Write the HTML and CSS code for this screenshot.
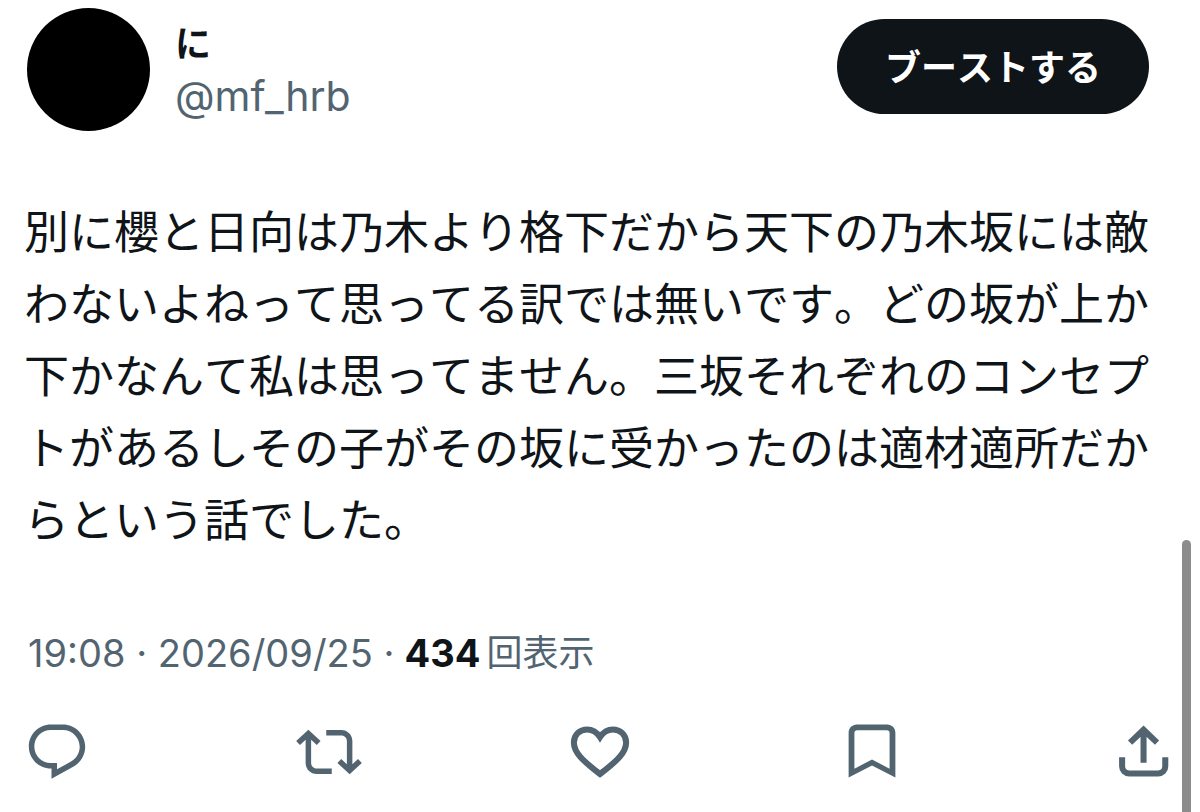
FILE: index.html
```html
<!DOCTYPE html>
<html lang="ja">
<head>
    <meta charset="UTF-8">
    <meta name="viewport" content="width=device-width, initial-scale=1.0">
    <title>に (@mf_hrb)</title>
    <link rel="stylesheet" href="styles.css">
</head>
<body>
    <article class="post">
        <header class="post-header">
            <div class="avatar"></div>
            <div class="author">
                <span class="name">に</span>
                <a class="handle" href="#">@mf_hrb</a>
            </div>
            <button class="boost" type="button">ブーストする</button>
        </header>

        <p class="post-text">別に櫻と日向は乃木より格下だから天下の乃木坂には敵<br>わないよねって思ってる訳では無いです。どの坂が上か<br>下かなんて私は思ってません。三坂それぞれのコンセプ<br>トがあるしその子がその坂に受かったのは適材適所だか<br>らという話でした。</p>

        <div class="meta">
            <span>19:08 · 2026/09/25 ·</span>
            <span class="views"><strong>434</strong><span class="views-label">回表示</span></span>
        </div>

        <div class="actions">
            <button type="button" aria-label="返信">
                <svg viewBox="0 0 24 24"><path d="M1.751 10c0-4.42 3.584-8 8.005-8h4.366c4.49 0 8.129 3.64 8.129 8.13 0 2.96-1.607 5.68-4.196 7.11l-8.054 4.46v-3.69h-.067c-4.49.1-8.183-3.51-8.183-8.01zm8.005-6c-3.317 0-6.005 2.69-6.005 6 0 3.37 2.77 6.08 6.138 6.01l.351-.01h1.761v2.3l5.087-2.81c1.951-1.08 3.163-3.13 3.163-5.36 0-3.39-2.744-6.13-6.129-6.13H9.756z"/></svg>
            </button>
            <button type="button" aria-label="リポスト">
                <svg viewBox="0 0 24 24"><path d="M4.5 3.88l4.432 4.14-1.364 1.46L5.5 7.55V16c0 1.1.896 2 2 2H13v2H7.5c-2.209 0-4-1.79-4-4V7.55L1.432 9.48.068 8.02 4.5 3.88zM16.5 6H11V4h5.5c2.209 0 4 1.79 4 4v8.45l2.068-1.93 1.364 1.46-4.432 4.14-4.432-4.14 1.364-1.46 2.068 1.93V8c0-1.1-.896-2-2-2z"/></svg>
            </button>
            <button type="button" aria-label="いいね">
                <svg viewBox="0 0 24 24"><path class="line" d="M12 6.6C10.7 4.6 9 3.8 7.3 3.8 4.6 3.8 2.5 5.8 2.5 8.5c0 3.600 3.200 6.700 9.500 11.500 6.300-4.800 9.500-7.900 9.500-11.500 0-2.700-2.100-4.700-4.800-4.700-1.700 0-3.400.8-4.700 2.800z"/></svg>
            </button>
            <button type="button" aria-label="ブックマーク">
                <svg viewBox="0 0 24 24"><path fill-rule="evenodd" d="M3.500 21.300V5c0-1.700 1.300-3 3-3h11c1.700 0 3 1.300 3 3v16.300L12 16.900zM5.600 18.100L12 14.700l6.400 3.400V5.100c0-.6-.4-1-1-1H6.600c-.6 0-1 .4-1 1z"/></svg>
            </button>
            <button type="button" aria-label="共有">
                <svg viewBox="0 0 24 24"><path class="line" d="M12.200 15.900V4M7.300 8.600l4.900-4.700 4.900 4.700M4.400 13.900v3.300c0 1.500 1.100 2.600 2.600 2.600h10.500c1.500 0 2.600-1.100 2.600-2.600v-3.300"/></svg>
            </button>
        </div>
    </article>

    <div class="scroll-thumb"></div>
</body>
</html>
```
FILE: styles.css
```css
body {
    margin: 0;
    background-color: #fff;
    color: #0f1419;
    font-family: Inter, "Noto Sans CJK JP", sans-serif;
    overflow: hidden;
}
button {
    padding: 0;
    border: none;
    background: none;
    font-family: inherit;
    cursor: pointer;
}
.post {
    padding: 8px 24px 0;
}
.post-header {
    display: flex;
    align-items: flex-start;
    padding: 0 27px 0 3px;
}
.avatar {
    width: 123px;
    height: 123px;
    border-radius: 50%;
    background-color: #000;
}
.author {
    display: flex;
    flex-direction: column;
    flex: 1;
    margin: 10px 0 0 25px;
}
.name {
    font-size: 36px;
    line-height: 52px;
    font-weight: bold;
}
.handle {
    font-size: 41px;
    line-height: 52px;
    color: #536471;
    text-decoration: none;
}
.boost {
    margin-top: 11px;
    padding: 0 48px 4px;
    height: 95px;
    border-radius: 48px;
    background-color: #0f1419;
    color: #fff;
    font-size: 36px;
    font-weight: bold;
    font-kerning: none;
}
.post-text {
    margin: 66px 0 0;
    font-size: 45px;
    line-height: 72px;
    font-kerning: none;
    text-spacing-trim: space-all;
    white-space: nowrap;
}
.meta {
    display: flex;
    gap: 10px;
    margin-top: 70px;
    padding-left: 4px;
    font-size: 38px;
    line-height: 52px;
    color: #536471;
}
.views {
    display: flex;
    gap: 6px;
}
.views strong {
    color: #0f1419;
}
.views-label {
    font-size: 36px;
}
.actions {
    display: flex;
    justify-content: space-between;
    margin-top: 40px;
}
.actions svg {
    display: block;
    width: 66px;
    height: 66px;
    fill: #536471;
}
.actions .line {
    fill: none;
    stroke: #536471;
    stroke-width: 2.2;
}
/* scroll thumb runs off the bottom edge */
.scroll-thumb {
    position: fixed;
    top: 540px;
    right: 9px;
    bottom: -10px;
    width: 9px;
    border-radius: 5px;
    background-color: #8c8c8c;
}
```
